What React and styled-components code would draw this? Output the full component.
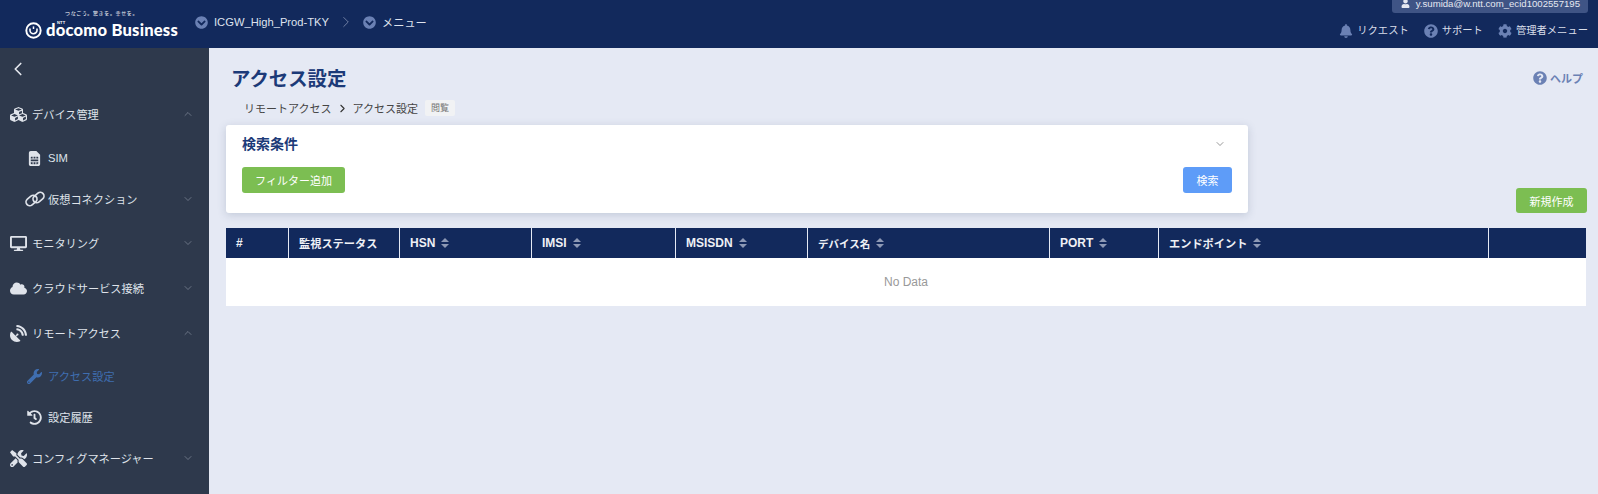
import React from 'react'
import styled, { createGlobalStyle } from 'styled-components'
import {
  FaBell, FaChevronCircleDown, FaCloud, FaCog, FaCubes, FaDesktop, FaHistory,
  FaQuestionCircle, FaSatelliteDish, FaSimCard, FaTools, FaUser, FaWrench,
} from 'react-icons/fa'
import { ChevronDown, ChevronLeft, ChevronRight, ChevronUp } from 'lucide-react'

const navy = '#12295c'
const fontStack = '"Liberation Sans", "Noto Sans CJK JP", sans-serif'

const GlobalStyle = createGlobalStyle`
  html, body { margin: 0; padding: 0; height: 100%; overflow: hidden; }
  body { font-family: ${fontStack}; background: #e5e9f4; }
  * { box-sizing: border-box; }
`

const Page = styled.div`
  width: 1598px;
  height: 494px;
  display: flex;
  flex-direction: column;
  overflow: hidden;
`

const Header = styled.header`
  height: 48px;
  flex: none;
  background: ${navy};
  display: flex;
  color: #d9deea;
`

const Logo = styled.div`
  width: 194px;
  flex: none;
  padding: 9px 0 0 25px;
  color: #fff;
`

const Tagline = styled.div`
  font-size: 5px;
  line-height: 8px;
  letter-spacing: 0.65px;
  margin-left: 40px;
  white-space: nowrap;
`

const LogoRow = styled.div`
  display: flex;
  align-items: center;
  gap: 4px;
  margin-top: 3px;
`

const LogoText = styled.span`
  position: relative;
  font-family: Lato, "Liberation Sans", sans-serif;
  font-weight: 900;
  font-size: 16.6px;
  line-height: 20px;
  white-space: nowrap;
  letter-spacing: 0.2px;
`

const LogoNtt = styled.span`
  position: absolute;
  left: 11px;
  top: 0;
  font-size: 4px;
  line-height: 5px;
  font-weight: 700;
  font-family: ${fontStack};
`

const Crumbs = styled.div`
  display: flex;
  align-items: center;
  height: 44px;
  font-size: 11.2px;
  flex: none;
  margin-left: 1px;
  color: #dfe3ee;
`

const CrumbIcon = styled(FaChevronCircleDown)`
  color: #6b81b4;
  font-size: 13px;
  margin-right: 6px;
`

const CrumbArrow = styled(ChevronRight)`
  color: #8c9ab9;
  margin: 0 8px 0 8px;
`

const HeaderRight = styled.div`
  margin-left: auto;
  display: flex;
  flex-direction: column;
  align-items: flex-end;
  padding-right: 10px;
`

const UserBadge = styled.div`
  height: 13px;
  padding: 0 8px 0 9px;
  background: #3f5485;
  border-radius: 0 0 3px 3px;
  display: flex;
  align-items: flex-start;
  gap: 6px;
  color: #e6e9f2;
  overflow: hidden;
  svg { margin-top: -1px; }
`

const UserText = styled.span`
  font-size: 9.6px;
  line-height: 7px;
  white-space: nowrap;
`

const HeaderLinks = styled.div`
  display: flex;
  align-items: center;
  gap: 15px;
  margin-top: 10px;
`

const HeaderLink = styled.div`
  display: flex;
  align-items: center;
  gap: 4px;
  font-size: 10.3px;
  line-height: 16px;
  color: #d9deea;
  svg { color: #6b81b4; font-size: 14px; }
`

const Body = styled.div`
  flex: 1;
  display: flex;
  min-height: 0;
`

const Sidebar = styled.nav`
  width: 209px;
  flex: none;
  background: #2e394c;
  padding: 10px 0 0;
  color: #dfe3ea;
`

const BackButton = styled.div`
  height: 32px;
  padding-left: 7px;
  display: flex;
  align-items: flex-start;
  color: #e6e9ef;
`

const NavRow = styled.div`
  height: 40px;
  margin-top: ${p => p.$mt}px;
  padding-left: ${p => (p.$depth ? 24 : 10)}px;
  display: flex;
  align-items: center;
  font-size: 11.2px;
  color: ${p => (p.$active ? '#3f6eb0' : '#dfe3ea')};
`

const IconSlot = styled.span`
  width: ${p => (p.$depth ? 21 : 22)}px;
  flex: none;
  display: flex;
  align-items: center;
  justify-content: ${p => (p.$depth ? 'center' : 'flex-start')};
  font-size: ${p => (p.$depth ? 15 : 17)}px;
`

const NavLabel = styled.span`
  margin-left: ${p => (p.$depth ? 3 : 0)}px;
  white-space: nowrap;
`

const NavCaret = styled.span`
  margin-left: auto;
  margin-right: 15px;
  display: flex;
  color: #a4adbb;
`

const Main = styled.main`
  flex: 1;
  padding: 18px 10px 0 17px;
  min-width: 0;
`

const TitleRow = styled.div`
  display: flex;
  justify-content: space-between;
  align-items: flex-start;
  padding-left: 5px;
`

const Title = styled.h1`
  margin: 0;
  font-size: 19.4px;
  line-height: 27px;
  font-weight: 700;
  color: #1c3a78;
`

const Help = styled.div`
  display: flex;
  align-items: center;
  gap: 3px;
  margin: 4px 5px 0 0;
  font-size: 11px;
  font-weight: 700;
  color: #6b81b4;
  svg { font-size: 14px; }
`

const Breadcrumb = styled.div`
  display: flex;
  align-items: center;
  height: 16px;
  margin-top: 7px;
  padding-left: 18px;
  font-size: 11px;
  color: #444;
`

const BreadArrow = styled(ChevronRight)`
  margin: 0 3px 0 5px;
  color: #333;
`

const Tag = styled.span`
  margin-left: 7px;
  padding: 0 6px;
  height: 16px;
  line-height: 16px;
  font-size: 9px;
  color: #777;
  background: #f1f2f4;
  border-radius: 2px;
`

const Toolbar = styled.div`
  display: flex;
  align-items: flex-end;
  justify-content: space-between;
  margin-top: 9px;
  padding-right: 1px;
`

const Card = styled.section`
  width: 1022px;
  height: 88px;
  background: #fff;
  border-radius: 3px;
  box-shadow: 0 2px 8px rgba(70, 85, 120, 0.22);
  padding: 9px 16px 0;
`

const CardHead = styled.div`
  display: flex;
  justify-content: space-between;
  align-items: center;
  height: 20px;
  padding-right: 6px;
  color: #333;
`

const CardTitle = styled.h2`
  margin: 0;
  font-size: 14px;
  line-height: 20px;
  font-weight: 700;
  color: #1c3a78;
`

const CardActions = styled.div`
  display: flex;
  justify-content: space-between;
  margin-top: 13px;
`

const Button = styled.button`
  height: ${p => p.$h || 26}px;
  width: ${p => p.$w}px;
  padding: 0;
  border: 0;
  border-radius: 3px;
  font-family: ${fontStack};
  font-size: 11px;
  color: #fff;
  background: ${p => (p.$primary ? '#5e9cf8' : '#7cbe52')};
`

const Table = styled.div`
  margin-top: 15px;
  width: 1360px;
`

const HeadRow = styled.div`
  display: flex;
  height: 30px;
  background: ${navy};
`

const HeadCell = styled.div`
  width: ${p => p.$w}px;
  flex: none;
  display: flex;
  align-items: center;
  gap: 6px;
  padding-left: 10px;
  font-size: ${p => p.$size || 12}px;
  font-weight: 700;
  color: #eef0f5;
  border-right: ${p => (p.$last ? 0 : '1px solid #e5e9f4')};
`

const SortIcon = styled.svg`
  width: 8px;
  height: 10px;
  fill: #8d99b5;
`

const EmptyRow = styled.div`
  height: 48px;
  background: #fff;
  display: flex;
  align-items: center;
  justify-content: center;
  font-size: 12px;
  color: #999;
`

const DocomoMark = () => (
  <svg width="17" height="17" viewBox="0 0 17 17" fill="none" stroke="#fff">
    <circle cx="8.5" cy="8.5" r="7.2" strokeWidth="1.9" />
    <path d="M5 6.6v1.6a3.5 3.5 0 0 0 7 0V6.6" strokeWidth="1.6" />
    <path d="M8.5 4.4v2.6" strokeWidth="1.5" />
  </svg>
)

const LinkRings = () => (
  <svg width="20" height="18" viewBox="0 0 20 18" fill="none" stroke="currentColor" strokeWidth="1.7">
    <rect x="0.5" y="6.8" width="12" height="7.4" rx="3.7" transform="rotate(-40 6.5 10.5)" />
    <rect x="7.5" y="3.8" width="12" height="7.4" rx="3.7" transform="rotate(-40 13.5 7.5)" />
  </svg>
)

const Sort = () => (
  <SortIcon viewBox="0 0 8 10">
    <path d="M4 0 8 4H0zM4 10 0 6h8z" />
  </SortIcon>
)

const navItems = [
  { label: 'デバイス管理', Icon: FaCubes, mt: 4, open: true },
  { label: 'SIM', Icon: FaSimCard, mt: 4, depth: 1 },
  { label: '仮想コネクション', Icon: LinkRings, mt: 1, depth: 1, open: false },
  { label: 'モニタリング', Icon: FaDesktop, mt: 4, open: false },
  { label: 'クラウドサービス接続', Icon: FaCloud, mt: 5, open: false },
  { label: 'リモートアクセス', Icon: FaSatelliteDish, mt: 5, open: true },
  { label: 'アクセス設定', Icon: FaWrench, mt: 3, depth: 1, active: true },
  { label: '設定履歴', Icon: FaHistory, mt: 1, depth: 1 },
  { label: 'コンフィグマネージャー', Icon: FaTools, mt: 1, open: false },
]

const columns = [
  { w: 63, label: '#' },
  { w: 111, label: '監視ステータス', size: 11.2 },
  { w: 132, label: 'HSN', sort: true },
  { w: 144, label: 'IMSI', sort: true },
  { w: 132, label: 'MSISDN', sort: true },
  { w: 242, label: 'デバイス名', size: 10.5, sort: true },
  { w: 109, label: 'PORT', sort: true },
  { w: 330, label: 'エンドポイント', size: 11.2, sort: true },
  { w: 97, last: true },
]

const App = () => (
  <Page>
    <GlobalStyle />
    <Header>
      <Logo>
        <Tagline>つなごう。驚きを。幸せを。</Tagline>
        <LogoRow>
          <DocomoMark />
          <LogoText>
            <LogoNtt>NTT</LogoNtt>
            docomo Business
          </LogoText>
        </LogoRow>
      </Logo>
      <Crumbs>
        <CrumbIcon />
        ICGW_High_Prod-TKY
        <CrumbArrow size={18} strokeWidth={1} />
        <CrumbIcon />
        メニュー
      </Crumbs>
      <HeaderRight>
        <UserBadge>
          <FaUser size={9} />
          <UserText>y.sumida@w.ntt.com_ecid1002557195</UserText>
        </UserBadge>
        <HeaderLinks>
          <HeaderLink><FaBell />リクエスト</HeaderLink>
          <HeaderLink><FaQuestionCircle />サポート</HeaderLink>
          <HeaderLink><FaCog />管理者メニュー</HeaderLink>
        </HeaderLinks>
      </HeaderRight>
    </Header>
    <Body>
      <Sidebar>
        <BackButton><ChevronLeft size={22} strokeWidth={1.8} /></BackButton>
        {navItems.map(({ label, Icon, mt, depth, open, active }) => (
          <NavRow key={label} $mt={mt} $depth={depth} $active={active}>
            <IconSlot $depth={depth}><Icon /></IconSlot>
            <NavLabel $depth={depth}>{label}</NavLabel>
            {open !== undefined && (
              <NavCaret>
                {open ? <ChevronUp size={12} strokeWidth={1} /> : <ChevronDown size={12} strokeWidth={1} />}
              </NavCaret>
            )}
          </NavRow>
        ))}
      </Sidebar>
      <Main>
        <TitleRow>
          <Title>アクセス設定</Title>
          <Help><FaQuestionCircle />ヘルプ</Help>
        </TitleRow>
        <Breadcrumb>
          リモートアクセス
          <BreadArrow size={13} strokeWidth={2} />
          アクセス設定
          <Tag>閲覧</Tag>
        </Breadcrumb>
        <Toolbar>
          <Card>
            <CardHead>
              <CardTitle>検索条件</CardTitle>
              <ChevronDown size={12} strokeWidth={1} />
            </CardHead>
            <CardActions>
              <Button $w={103}>フィルター追加</Button>
              <Button $w={49} $primary>検索</Button>
            </CardActions>
          </Card>
          <Button $w={71} $h={25}>新規作成</Button>
        </Toolbar>
        <Table>
          <HeadRow>
            {columns.map(({ w, label, sort, last, size }, i) => (
              <HeadCell key={i} $w={w} $last={last} $size={size}>
                {label}
                {sort && <Sort />}
              </HeadCell>
            ))}
          </HeadRow>
          <EmptyRow>No Data</EmptyRow>
        </Table>
      </Main>
    </Body>
  </Page>
)

export default App
